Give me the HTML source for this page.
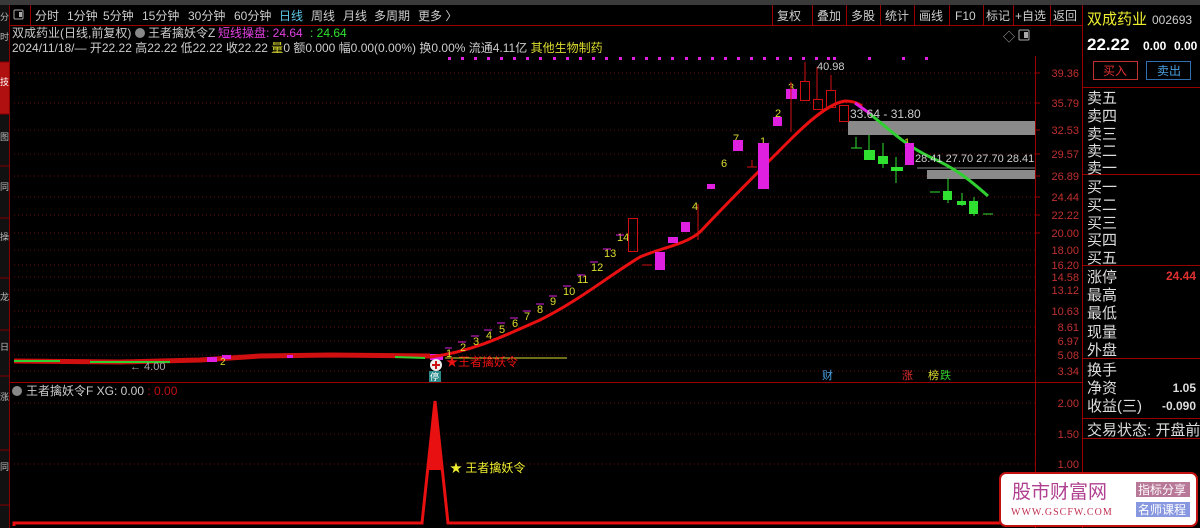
<!DOCTYPE html>
<html><head><meta charset="utf-8"><style>
*{margin:0;padding:0;box-sizing:border-box}
body{width:1200px;height:528px;background:#000;overflow:hidden;position:relative;font-family:"Liberation Sans","Noto Sans CJK SC",sans-serif;}
svg{position:absolute;left:0;top:0}
</style></head><body>
<svg width="1200" height="528" font-family="Liberation Sans, Noto Sans CJK SC, sans-serif">
<rect x="0" y="0" width="1200" height="5" fill="#3a3a3a"/>
<rect x="0" y="5" width="9" height="523" fill="#111"/>
<rect x="0" y="62" width="9" height="52" fill="#b01010"/>
<g stroke="#800" stroke-width="1">
<line x1="9.5" y1="5" x2="9.5" y2="528"/>
<line x1="0" y1="62" x2="9" y2="62"/><line x1="0" y1="114" x2="9" y2="114"/><line x1="0" y1="166" x2="9" y2="166"/><line x1="0" y1="218" x2="9" y2="218"/><line x1="0" y1="278" x2="9" y2="278"/><line x1="0" y1="330" x2="9" y2="330"/><line x1="0" y1="376" x2="9" y2="376"/><line x1="0" y1="450" x2="9" y2="450"/><line x1="0" y1="505" x2="9" y2="505"/>
</g>
<g fill="#bbb" font-size="9"><text x="0" y="20">分</text><text x="0" y="40">时</text><text x="0" y="85" fill="#fff">技</text><text x="0" y="140">图</text><text x="0" y="190">同</text><text x="0" y="240">操</text><text x="0" y="300">龙</text><text x="0" y="350">日</text><text x="0" y="400">涨</text><text x="0" y="470">同</text></g>
<g stroke="#900" fill="none"><line x1="10" y1="25.5" x2="1083" y2="25.5"/><line x1="1082.5" y1="5" x2="1082.5" y2="528"/><line x1="1035.5" y1="56" x2="1035.5" y2="528"/><line x1="10" y1="382.5" x2="1082" y2="382.5"/>
<line x1="30.5" y1="5" x2="30.5" y2="25"/>
<line x1="772.5" y1="5" x2="772.5" y2="25"/><line x1="812.5" y1="5" x2="812.5" y2="25"/><line x1="846.5" y1="5" x2="846.5" y2="25"/><line x1="880.5" y1="5" x2="880.5" y2="25"/><line x1="914.5" y1="5" x2="914.5" y2="25"/><line x1="949.5" y1="5" x2="949.5" y2="25"/><line x1="983.5" y1="5" x2="983.5" y2="25"/><line x1="1013.5" y1="5" x2="1013.5" y2="25"/><line x1="1050.5" y1="5" x2="1050.5" y2="25"/></g>
<rect x="14" y="10" width="9" height="9" rx="1" fill="none" stroke="#aaa"/><rect x="19" y="12" width="3" height="5" fill="#aaa"/>
<g font-size="12" fill="#ccc"><text x="35" y="20">分时</text><text x="67" y="20">1分钟</text><text x="103" y="20">5分钟</text><text x="142" y="20">15分钟</text><text x="188" y="20">30分钟</text><text x="234" y="20">60分钟</text><text x="279" y="20" fill="#5cc8e8">日线</text><text x="311" y="20">周线</text><text x="343" y="20">月线</text><text x="374" y="20">多周期</text><text x="418" y="20">更多 〉</text>
<text x="777" y="20">复权</text><text x="817" y="20">叠加</text><text x="851" y="20">多股</text><text x="885" y="20">统计</text><text x="919" y="20">画线</text><text x="955" y="20">F10</text><text x="986" y="20">标记</text><text x="1015" y="20">+自选</text><text x="1053" y="20">返回</text></g>
<g font-size="12"><text x="12" y="37" fill="#ccc">双成药业(日线,前复权)</text><circle cx="140" cy="33" r="5" fill="#888"/><text x="148" y="37" fill="#ccc">王者擒妖令Z</text><text x="218" y="37" fill="#e040e0">短线操盘: 24.64</text><text x="310" y="37" fill="#30e030">: 24.64</text>
<text x="12" y="52" fill="#ccc">2024/11/18/— 开22.22 高22.22 低22.22 收22.22 <tspan fill="#dcdc30">量</tspan><tspan fill="#ccc">0 额0.000 幅0.00(0.00%) 换0.00% 流通4.11亿 </tspan><tspan fill="#dcdc30">其他生物制药</tspan></text></g>
<text x="1003" y="41" font-size="12" fill="#aaa">◇</text><rect x="1019" y="30" width="10" height="10" rx="1" fill="none" stroke="#aaa"/><rect x="1024" y="32" width="4" height="6" fill="#aaa"/>
<g stroke="#6a0a0a" stroke-dasharray="1,3">
<line x1="14" y1="73" x2="1035" y2="73"/><line x1="14" y1="103" x2="1035" y2="103"/><line x1="14" y1="130" x2="1035" y2="130"/><line x1="14" y1="154" x2="1035" y2="154"/><line x1="14" y1="176" x2="1035" y2="176"/><line x1="14" y1="197" x2="1035" y2="197"/><line x1="14" y1="215" x2="1035" y2="215"/><line x1="14" y1="233" x2="1035" y2="233"/><line x1="14" y1="250" x2="1035" y2="250"/><line x1="14" y1="265" x2="1035" y2="265"/><line x1="14" y1="277" x2="1035" y2="277"/><line x1="14" y1="290" x2="1035" y2="290"/><line x1="14" y1="311" x2="1035" y2="311"/><line x1="14" y1="327" x2="1035" y2="327"/><line x1="14" y1="341" x2="1035" y2="341"/><line x1="14" y1="355" x2="1035" y2="355"/><line x1="14" y1="371" x2="1035" y2="371"/>
<line x1="14" y1="403" x2="1035" y2="403"/><line x1="14" y1="434" x2="1035" y2="434"/><line x1="14" y1="464" x2="1035" y2="464"/></g>
<g font-size="11" fill="#c03030" text-anchor="end"><text x="1079" y="77">39.36</text><text x="1079" y="107">35.79</text><text x="1079" y="134">32.53</text><text x="1079" y="158">29.57</text><text x="1079" y="180">26.89</text><text x="1079" y="201">24.44</text><text x="1079" y="219">22.22</text><text x="1079" y="237">20.00</text><text x="1079" y="254">18.00</text><text x="1079" y="269">16.20</text><text x="1079" y="281">14.58</text><text x="1079" y="294">13.12</text><text x="1079" y="315">10.63</text><text x="1079" y="331">8.61</text><text x="1079" y="345">6.97</text><text x="1079" y="359">5.08</text><text x="1079" y="375">3.34</text>
<text x="1079" y="407">2.00</text><text x="1079" y="438">1.50</text><text x="1079" y="468">1.00</text></g>
<g stroke="#900"><line x1="1035" y1="73" x2="1040" y2="73"/><line x1="1035" y1="103" x2="1040" y2="103"/><line x1="1035" y1="130" x2="1040" y2="130"/><line x1="1035" y1="154" x2="1040" y2="154"/><line x1="1035" y1="176" x2="1040" y2="176"/><line x1="1035" y1="197" x2="1040" y2="197"/><line x1="1035" y1="215" x2="1040" y2="215"/><line x1="1035" y1="233" x2="1040" y2="233"/></g>
<g fill="#e020e0"><rect x="448" y="57" width="3" height="3"/><rect x="461" y="57" width="3" height="3"/><rect x="474" y="57" width="3" height="3"/><rect x="487" y="57" width="3" height="3"/><rect x="500" y="57" width="3" height="3"/><rect x="513" y="57" width="3" height="3"/><rect x="526" y="57" width="3" height="3"/><rect x="539" y="57" width="3" height="3"/><rect x="553" y="57" width="3" height="3"/><rect x="566" y="57" width="3" height="3"/><rect x="579" y="57" width="3" height="3"/><rect x="592" y="57" width="3" height="3"/><rect x="605" y="57" width="3" height="3"/><rect x="619" y="57" width="3" height="3"/><rect x="632" y="57" width="3" height="3"/><rect x="645" y="57" width="3" height="3"/><rect x="658" y="57" width="3" height="3"/><rect x="671" y="57" width="3" height="3"/><rect x="685" y="57" width="3" height="3"/><rect x="698" y="57" width="3" height="3"/><rect x="711" y="57" width="3" height="3"/><rect x="724" y="57" width="3" height="3"/><rect x="737" y="57" width="3" height="3"/><rect x="750" y="57" width="3" height="3"/><rect x="763" y="57" width="3" height="3"/><rect x="776" y="57" width="3" height="3"/><rect x="789" y="57" width="3" height="3"/><rect x="802" y="57" width="3" height="3"/><rect x="815" y="57" width="3" height="3"/><rect x="827" y="57" width="3" height="3"/><rect x="833" y="57" width="3" height="3"/><rect x="868" y="57" width="3" height="3"/><rect x="902" y="57" width="3" height="3"/><rect x="925" y="57" width="3" height="3"/></g>
<rect x="848" y="121" width="187" height="14" fill="#8a8a8a"/>
<rect x="927" y="170" width="108" height="9" fill="#8a8a8a"/><line x1="917" y1="168" x2="1035" y2="168" stroke="#8a8a8a"/>
<path d="M14 361 L120 362 L200 360 L260 356 L330 355 L430 356" stroke="#d01010" stroke-width="5" fill="none"/>
<path d="M14 361 L60 361 M90 362 L170 362 M395 357 L425 358" stroke="#30d030" stroke-width="2" fill="none"/>
<g fill="#e020e0"><rect x="207" y="357" width="10" height="5"/><rect x="222" y="355" width="9" height="4"/><rect x="287" y="355" width="6" height="3"/><rect x="430" y="354" width="13" height="6"/></g>
<text x="130" y="370" font-size="11" fill="#aaa">← 4.00</text>
<text x="220" y="365" font-size="10" fill="#dcdc30">2</text>
<line x1="445" y1="358" x2="567" y2="358" stroke="#dcdc30"/>
<path d="M430 357 C470 352 500 338 540 320 C580 300 610 275 640 257 C660 248 685 245 700 232 C730 200 760 170 790 140 C810 120 830 103 845 101 C852 101 858 103 862 106" stroke="#e81010" stroke-width="3" fill="none"/>
<path d="M855 103 L872 115" stroke="#e020e0" stroke-width="3"/>
<path d="M870 114 C890 130 905 145 930 157 C955 168 970 180 988 196" stroke="#30d030" stroke-width="3" fill="none"/>
<g font-size="11" fill="#dcdc30"><text x="446" y="357">1</text><text x="460" y="351">2</text><text x="473" y="345">3</text><text x="486" y="339">4</text><text x="499" y="333">5</text><text x="512" y="327">6</text><text x="524" y="320">7</text><text x="537" y="313">8</text><text x="550" y="305">9</text><text x="563" y="295">10</text><text x="577" y="283">11</text><text x="591" y="271">12</text><text x="604" y="257">13</text><text x="617" y="241">14</text><text x="721" y="167">6</text><text x="733" y="142">7</text><text x="760" y="145">1</text><text x="775" y="117">2</text><text x="788" y="91">3</text><text x="692" y="210">4</text><text x="904" y="146">1</text></g>
<g stroke="#e020e0"><line x1="445" y1="348" x2="452" y2="348"/><line x1="458" y1="342" x2="466" y2="342"/><line x1="471" y1="336" x2="479" y2="336"/><line x1="484" y1="330" x2="492" y2="330"/><line x1="497" y1="323" x2="505" y2="323"/><line x1="510" y1="318" x2="518" y2="318"/><line x1="523" y1="311" x2="531" y2="311"/><line x1="536" y1="304" x2="544" y2="304"/><line x1="549" y1="296" x2="557" y2="296"/><line x1="563" y1="286" x2="571" y2="286"/><line x1="577" y1="275" x2="585" y2="275"/><line x1="590" y1="262" x2="598" y2="262"/><line x1="603" y1="249" x2="611" y2="249"/><line x1="616" y1="235" x2="624" y2="235"/></g>
<rect x="628.5" y="218.5" width="9" height="33" fill="none" stroke="#d01010"/>
<line x1="642" y1="265" x2="652" y2="265" stroke="#d01010"/>
<g fill="#e020e0"><rect x="655" y="252" width="10" height="18"/><rect x="668" y="237" width="10" height="6"/><rect x="681" y="222" width="9" height="10"/><rect x="707" y="184" width="8" height="5"/><rect x="733" y="140" width="10" height="11"/><rect x="758" y="143" width="11" height="46"/><rect x="773" y="117" width="9" height="9"/><rect x="786" y="89" width="11" height="10"/><rect x="905" y="143" width="9" height="22"/></g>
<g stroke="#d01010" fill="none"><line x1="698" y1="204" x2="698" y2="240"/><line x1="791" y1="82" x2="791" y2="132"/><line x1="752" y1="160" x2="752" y2="167"/><line x1="747" y1="167" x2="757" y2="167"/>
<rect x="800.5" y="81.5" width="9" height="19"/><line x1="805" y1="62" x2="805" y2="81"/><rect x="813.5" y="99.5" width="9" height="10"/><line x1="817" y1="67" x2="817" y2="99"/><rect x="826.5" y="90.5" width="9" height="17"/><line x1="831" y1="75" x2="831" y2="90"/><rect x="839.5" y="105.5" width="9" height="16"/></g>
<text x="817" y="70" font-size="11" fill="#ccc">40.98</text>
<text x="850" y="118" font-size="12" fill="#ccc">33.64 - 31.80</text>
<text x="915" y="162" font-size="11" fill="#ccc">28.41 27.70 27.70 28.41</text>
<g fill="#30e030"><rect x="864" y="150" width="11" height="10"/><rect x="878" y="156" width="10" height="8"/><rect x="891" y="167" width="12" height="4"/><rect x="943" y="191" width="9" height="9"/><rect x="957" y="201" width="9" height="4"/><rect x="969" y="201" width="9" height="13"/></g>
<g stroke="#30e030"><line x1="856" y1="137" x2="856" y2="148"/><line x1="851" y1="148" x2="862" y2="148"/><line x1="869" y1="135" x2="869" y2="160"/><line x1="883" y1="143" x2="883" y2="168"/><line x1="896" y1="157" x2="896" y2="183"/><line x1="948" y1="178" x2="948" y2="203"/><line x1="930" y1="192" x2="940" y2="192"/><line x1="962" y1="193" x2="962" y2="206"/><line x1="974" y1="197" x2="974" y2="216"/><line x1="983" y1="214" x2="993" y2="214"/></g>
<circle cx="436" cy="365" r="6" fill="#eee"/><path d="M432 365h8M436 361v8" stroke="#d01010" stroke-width="2"/>
<rect x="429" y="371" width="12" height="11" fill="#2a8a8a"/><text x="430" y="380" font-size="9" fill="#fff">停</text>
<text x="446" y="366" font-size="12" fill="#e81010">★王者擒妖令</text>
<text x="822" y="379" font-size="11" fill="#4aa0e0">财</text><text x="902" y="379" font-size="11" fill="#e03030">涨</text><text x="928" y="379" font-size="11" fill="#dcdc30">榜</text><text x="940" y="379" font-size="11" fill="#30d030">跌</text>
<circle cx="17" cy="391" r="5" fill="#888"/>
<text x="26" y="395" font-size="12" fill="#ccc">王者擒妖令F XG: 0.00 <tspan fill="#c01010">: 0.00</tspan></text>
<path d="M14 526 L14 523 L422 523 L435 401 L448 523 L1035 523" stroke="#e81010" stroke-width="3" fill="none"/>
<path d="M429 470 L435 401 L441 470 Z" fill="#e81010"/>
<text x="450" y="472" font-size="12" fill="#eeee30">★ 王者擒妖令</text>
<text x="1087" y="24" font-size="15" fill="#eeee30">双成药业</text><text x="1152" y="24" font-size="12" fill="#ccc">002693</text>
<text x="1087" y="50" font-size="17" font-weight="bold" fill="#fff">22.22</text><text x="1143" y="50" font-size="12" font-weight="bold" fill="#fff">0.00</text><text x="1174" y="50" font-size="12" font-weight="bold" fill="#fff">0.00</text>
<rect x="1093.5" y="61.5" width="44" height="18" fill="none" stroke="#c03030"/><text x="1103" y="75" font-size="12" fill="#e03030">买入</text>
<rect x="1146.5" y="61.5" width="44" height="18" fill="none" stroke="#3070b0"/><text x="1157" y="75" font-size="12" fill="#4aa0e0">卖出</text>
<g stroke="#900"><line x1="1083" y1="87.5" x2="1200" y2="87.5"/><line x1="1083" y1="174.5" x2="1200" y2="174.5"/><line x1="1083" y1="265.5" x2="1200" y2="265.5"/><line x1="1083" y1="358.5" x2="1200" y2="358.5"/><line x1="1083" y1="418.5" x2="1200" y2="418.5"/><line x1="1083" y1="438.5" x2="1200" y2="438.5"/></g>
<g font-size="15" fill="#ddd"><text x="1087" y="103">卖五</text><text x="1087" y="121">卖四</text><text x="1087" y="139">卖三</text><text x="1087" y="156">卖二</text><text x="1087" y="173">卖一</text><text x="1087" y="192">买一</text><text x="1087" y="210">买二</text><text x="1087" y="228">买三</text><text x="1087" y="245">买四</text><text x="1087" y="263">买五</text><text x="1087" y="282">涨停</text><text x="1087" y="300">最高</text><text x="1087" y="318">最低</text><text x="1087" y="337">现量</text><text x="1087" y="355">外盘</text><text x="1087" y="375">换手</text><text x="1087" y="393">净资</text><text x="1087" y="411">收益(三)</text><text x="1087" y="435">交易状态: 开盘前</text></g>
<g font-size="12" font-weight="bold" text-anchor="end"><text x="1196" y="280" fill="#e03030">24.44</text><text x="1196" y="392" fill="#ddd">1.05</text><text x="1196" y="410" fill="#ddd">-0.090</text></g>
<rect x="1000" y="473" width="197" height="53" rx="6" fill="#fff" stroke="#c01010" stroke-width="2"/>
<text x="1012" y="498" font-size="19" fill="#b04090">股市财富网</text>
<text x="1011" y="515" font-size="10" fill="#c03050" font-family="Liberation Serif, serif" letter-spacing="1">WWW.GSCFW.COM</text>
<rect x="1136" y="482" width="54" height="15" fill="#b87898"/><text x="1138" y="494" font-size="12" fill="#fff">指标分享</text>
<rect x="1136" y="502" width="54" height="15" fill="#8898e0"/><text x="1138" y="514" font-size="12" fill="#fff">名师课程</text>
</svg>
</body></html>
